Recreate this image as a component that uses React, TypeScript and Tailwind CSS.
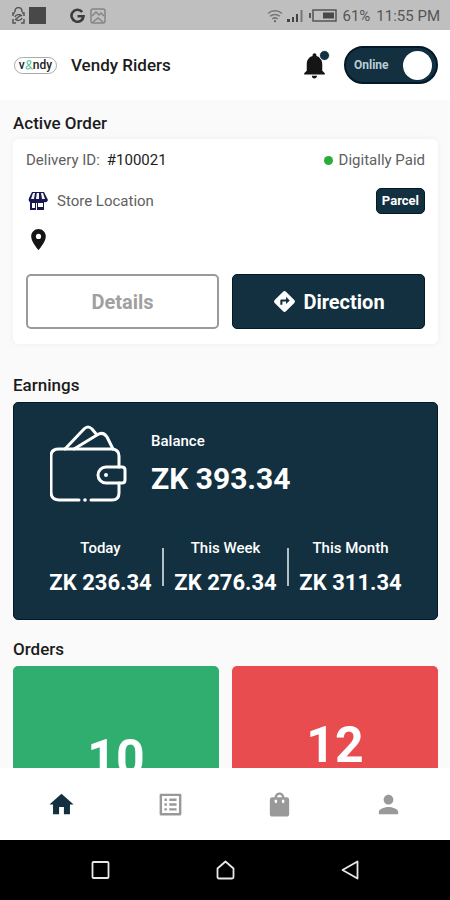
import { useState } from 'react'
import {
  MdDirections,
  MdHome,
  MdListAlt,
  MdLocationOn,
  MdNotifications,
  MdPerson,
  MdShoppingBag,
} from 'react-icons/md'

const earnings = [
  { label: 'Today', amount: 'ZK 236.34' },
  { label: 'This Week', amount: 'ZK 276.34' },
  { label: 'This Month', amount: 'ZK 311.34' },
]

const tabs = [
  { name: 'Home', icon: MdHome, active: true },
  { name: 'Requests', icon: MdListAlt, active: false },
  { name: 'Orders', icon: MdShoppingBag, active: false },
  { name: 'Profile', icon: MdPerson, active: false },
]

function StatusBar() {
  return (
    <div className="flex h-[30px] shrink-0 items-center justify-between bg-[#bfbfbf] pt-px pr-[10px] pl-[11px] text-[#555]">
      <div className="flex items-center">
        <svg width="15" height="17" viewBox="0 0 15 17" fill="none" stroke="#555" strokeWidth="1.5">
          <path d="M4 5V4a3.500 3.500 0 0 1 7 0v1" />
          <path d="M4 6H2v3M11 6h2v3M2 12v4h3M13 12v4h-3" />
          <path d="M4 10c1-3 5-3 7-1M11 11c-1 3-5 3-7 1M5 12l5-4" />
        </svg>
        <span className="ml-[3px] h-[17px] w-[17px] bg-[#484848]" />
        <svg className="ml-[24px]" width="15" height="16" viewBox="0 0 15 16" fill="none" stroke="#3c3c3c" strokeWidth="2.600">
          <path d="M12.200 4A6 6 0 1 0 13.500 8.300H7.500" />
        </svg>
        <svg className="ml-[5px]" width="16" height="16" viewBox="0 0 16 16" fill="none" stroke="#858585" strokeWidth="1.500">
          <rect x="1" y="1" width="14" height="14" rx="2" />
          <path d="M2 8l4-4 3 3 2-2 3 3M3 14l5-4 5 4" />
        </svg>
      </div>
      <div className="flex items-center">
        <svg width="16" height="14" viewBox="0 0 16 14" fill="none" stroke="#777" strokeWidth="1.500">
          <path d="M1 4.500a10.500 10.500 0 0 1 14 0M3 7.300a7.500 7.500 0 0 1 10 0M5.300 10a4.200 4.200 0 0 1 5.400 0" />
          <circle cx="8" cy="12.300" r="1" fill="#555" stroke="none" />
        </svg>
        <svg className="ml-[4px]" width="17" height="13" viewBox="0 0 17 13">
          <path d="M0 10h3v3H0zM5 8h2v5H5zM9 5h2v8H9z" fill="#444" />
          <path d="M13.500 1h2v12h-2z" fill="#777" />
        </svg>
        <svg className="ml-[5px]" width="28" height="13" viewBox="0 0 28 13">
          <path d="M0 4h2v5H0z" fill="#555" />
          <rect x="4" y="1" width="23" height="11" fill="none" stroke="#555" strokeWidth="1.500" />
          <path d="M14 3.500h11v6H14z" fill="#484848" />
        </svg>
        <span className="ml-[6px] text-[15px] leading-5">61%</span>
        <span className="ml-[6px] text-[15px] leading-5">11:55 PM</span>
      </div>
    </div>
  )
}

function Logo() {
  return (
    <span className="flex h-[17px] w-[43px] items-center justify-center rounded-full border border-[#aaa] text-xs leading-3 font-medium text-[#222]">
      v
      <svg width="8" height="13" viewBox="0 0 8 13" fill="none" stroke="#5cc9a0" strokeWidth="1.200">
        <path d="M1 9c0-2 5-3 5-6C6 1 2 1 2 3.500c0 2 4 4 5.500 7M1 9c1 2 4 1 5-1" />
      </svg>
      ndy
    </span>
  )
}

function WalletIcon() {
  return (
    <svg width="78" height="78" viewBox="0 0 78 78" fill="none" stroke="white" strokeWidth="3" strokeLinecap="round" strokeLinejoin="round">
      <path d="M29 75H9q-8 0-8-8V31q0-7 8-7h52q8 0 8 7v11M41 75h21q7 0 7-7V58" />
      <path d="M56 42h16q3 0 3 3v10q0 3-3 3H56a8 8 0 0 1 0-16z" />
      <path d="M15 24L34 4q4-4 8 0l5 6M24 24L47 10q6-4 10 2l6 12" />
      <circle cx="56" cy="50" r="2" fill="white" stroke="none" />
      <circle cx="35" cy="75" r="1.800" fill="white" stroke="none" />
    </svg>
  )
}

function Header() {
  const [online, setOnline] = useState(true)

  return (
    <header className="flex h-[70px] shrink-0 items-center bg-white pr-3 pl-[14px]">
      <Logo />
      <h1 className="ml-[14px] text-[17px] leading-6 font-medium text-[#1c1c1c]">
        Vendy Riders
      </h1>
      <button aria-label="Notifications" className="relative ml-auto text-[#151515]">
        <MdNotifications size={31} />
        <span className="absolute top-0 right-0 h-[11px] w-[11px] rounded-full border border-white bg-[#12303f]" />
      </button>
      <label
        className={`ml-[14px] flex h-[38px] w-[94px] cursor-pointer items-center justify-between rounded-full border-2 border-[#03192a] pr-1 pl-2 text-xs font-bold ${
          online ? 'bg-[#12303f] text-[#bccdd4]' : 'flex-row-reverse bg-gray-400 text-white'
        }`}
      >
        <input
          type="checkbox"
          className="sr-only"
          checked={online}
          onChange={(e) => setOnline(e.target.checked)}
        />
        {online ? 'Online' : 'Offline'}
        <span className="h-[29px] w-[29px] rounded-full bg-white" />
      </label>
    </header>
  )
}

function ActiveOrder() {
  return (
    <section>
      <h2 className="text-[17px] leading-6 font-medium text-[#1c1c1c]">Active Order</h2>
      <div className="mt-1 rounded-md bg-white px-[13px] pt-[9px] pb-[15px] text-[15px] leading-6 text-[#606060] shadow-[0_0_6px_rgba(0,0,0,0.05)]">
        <div className="flex items-center justify-between">
          <p>
            Delivery ID:
            <span className="ml-[7px] text-[#1c1c1c]">#100021</span>
          </p>
          <p className="flex items-center gap-[6px]">
            <span className="h-[9px] w-[9px] rounded-full bg-[#2bab38]" />
            Digitally Paid
          </p>
        </div>
        <div className="mt-4 flex items-center">
          <svg className="ml-[2px]" width="20" height="20" viewBox="0 0 20 20">
            <path d="M4 1h12l4 8q-1 3-4 2v8H9v-7h-1v7H2v-8q-2-1-1-4z" fill="#18184f" />
            <path d="M5 2h2L6 8H3zM8.800 2H11v6H8zM13 2h2l2 6h-3z" fill="#f4f4fb" />
            <path d="M4 12h3v5H4zM10 12h5v4h-5z" fill="white" />
          </svg>
          <p className="ml-[9px]">Store Location</p>
          <span className="ml-auto rounded-[5px] border border-[#03192a] bg-[#12303f] px-[5px] text-[13px] leading-6 font-bold text-white">
            Parcel
          </span>
        </div>
        <MdLocationOn className="mt-[13px]" size={25} color="#151515" />
        <div className="mt-[22px] grid grid-cols-2 gap-[13px] text-xl font-bold">
          <button className="h-[55px] rounded-[5px] border-2 border-[#9a9a9a] text-[#a0a0a0]">
            Details
          </button>
          <button className="flex h-[55px] items-center justify-center gap-[6px] rounded-[5px] border border-[#03192a] bg-[#12303f] text-white">
            <MdDirections size={25} />
            Direction
          </button>
        </div>
      </div>
    </section>
  )
}

function Earnings() {
  return (
    <section className="mt-[29px]">
      <h2 className="text-[17px] leading-6 font-medium text-[#1c1c1c]">Earnings</h2>
      <div className="mt-[5px] rounded-[5px] border border-[#03192a] bg-[#12303f] px-6 pt-[22px] pb-[22px] text-white">
        <div className="flex items-center">
          <span className="ml-3">
            <WalletIcon />
          </span>
          <div className="ml-[23px]">
            <p className="text-[15px] leading-5 font-medium">Balance</p>
            <p className="mt-[10px] text-[30px] leading-9 font-bold">ZK 393.34</p>
          </div>
        </div>
        <div className="mt-[35px] grid grid-cols-3">
          {earnings.map((item) => (
            <div key={item.label} className="group relative text-center">
              <p className="text-[15px] leading-5 font-medium">{item.label}</p>
              <p className="mt-[11px] text-[22px] leading-7 font-bold">{item.amount}</p>
              <span className="absolute top-[10px] -right-px h-[38px] w-[2px] bg-[#b4c0c7] group-last:hidden" />
            </div>
          ))}
        </div>
      </div>
    </section>
  )
}

function Orders() {
  return (
    <section className="mt-[17px]">
      <h2 className="text-[17px] leading-6 font-medium text-[#1c1c1c]">Orders</h2>
      <div className="mt-[5px] grid grid-cols-2 gap-[13px] text-center text-[50px] leading-[50px] font-bold text-white">
        <div className="h-48 rounded-[5px] bg-[#30ae70] pt-[67px]">10</div>
        <div className="h-48 rounded-[5px] bg-[#e84c4f] pt-[54px]">12</div>
      </div>
    </section>
  )
}

function TabBar() {
  return (
    <nav className="grid h-[72px] shrink-0 grid-cols-4 bg-white px-[7px]">
      {tabs.map(({ name, icon: Icon, active }) => (
        <a
          key={name}
          href="#"
          aria-label={name}
          className={`flex items-center justify-center ${active ? 'text-[#12303f]' : 'text-[#999]'}`}
        >
          <Icon size={29} />
        </a>
      ))}
    </nav>
  )
}

function SystemNav() {
  return (
    <div className="flex h-[60px] shrink-0 items-center justify-center gap-[106px] bg-black">
      <button aria-label="Recent apps">
        <svg width="19" height="20" viewBox="0 0 19 20" fill="none" stroke="#e8e8e8" strokeWidth="1.800">
          <rect x="1.500" y="2" width="16" height="16" rx="1" />
        </svg>
      </button>
      <button aria-label="Home screen">
        <svg width="19" height="20" viewBox="0 0 19 20" fill="none" stroke="#e8e8e8" strokeWidth="1.800" strokeLinejoin="round">
          <path d="M1.500 8.500l8-7 8 7V17q0 1.500-1.500 1.500H3Q1.500 18.500 1.500 17z" />
        </svg>
      </button>
      <button aria-label="Back">
        <svg width="19" height="20" viewBox="0 0 19 20" fill="none" stroke="#e8e8e8" strokeWidth="1.800" strokeLinejoin="round">
          <path d="M16.500 1.500v17L1.500 10z" />
        </svg>
      </button>
    </div>
  )
}

export default function App() {
  return (
    <div className="flex h-screen flex-col bg-[#fafafa] font-[Roboto,sans-serif]">
      <StatusBar />
      <Header />
      <main className="min-h-0 flex-1 overflow-hidden pt-[11px] pr-3 pl-[13px]">
        <ActiveOrder />
        <Earnings />
        <Orders />
      </main>
      <TabBar />
      <SystemNav />
    </div>
  )
}
